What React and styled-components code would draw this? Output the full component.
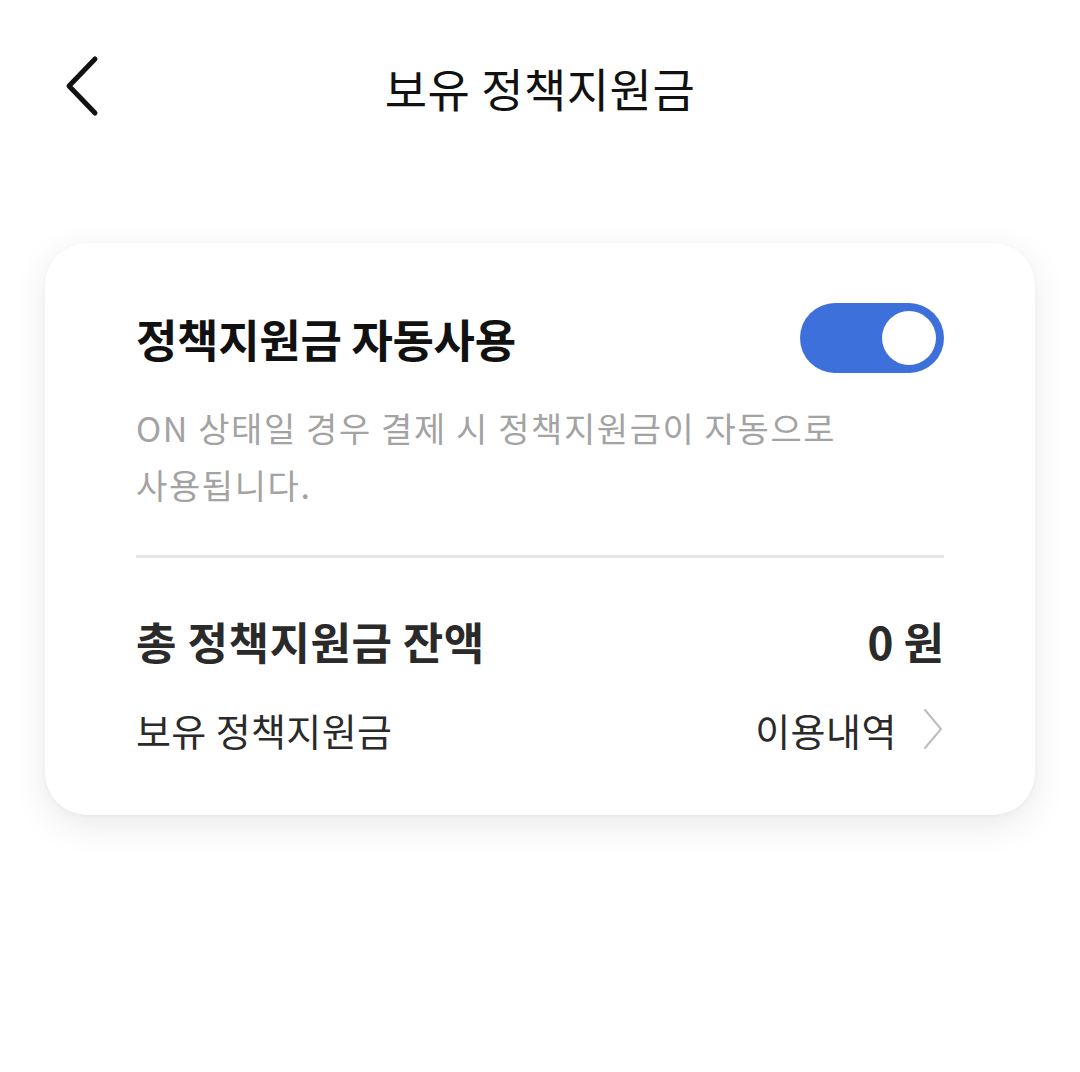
import React, { useState } from 'react';
import styled, { createGlobalStyle } from 'styled-components';

const GlobalStyle = createGlobalStyle`
  html, body {
    margin: 0;
    padding: 0;
    background: #ffffff;
  }
  body {
    font-family: "Noto Sans CJK KR", "Noto Sans", sans-serif;
    color: #111;
  }
`;

const Page = styled.div`
  width: 1080px;
  min-height: 1072px;
  background: #fff;
`;

const Header = styled.header`
  height: 174px;
  display: grid;
  grid-template-columns: 1fr auto 1fr;
  align-items: center;
  padding: 0 0 0 58px;
  box-sizing: border-box;
`;

const BackButton = styled.button`
  width: 48px;
  height: 64px;
  padding: 0;
  border: none;
  background: none;
  cursor: pointer;
  display: flex;
  align-items: center;
  justify-content: flex-start;
`;

const Title = styled.h1`
  margin: 0 58px 0 0;
  font-size: 46px;
  font-weight: 400;
  color: #111;
  letter-spacing: 0.5px;
`;

const Card = styled.section`
  margin: 69px 45px 0;
  padding: 60px 91px 56px;
  border-radius: 42px;
  background: #fff;
  box-shadow: 0 10px 36px rgba(0, 0, 0, 0.09), 0 1px 4px rgba(0, 0, 0, 0.04);
`;

const Row = styled.div`
  display: flex;
  justify-content: space-between;
  align-items: center;
  height: ${p => p.h || 60}px;
  margin-top: ${p => p.mt || 0}px;
`;

const SettingTitle = styled.span`
  font-size: 45px;
  font-weight: 700;
  color: #111;
  letter-spacing: -0.3px;
`;

const Switch = styled.button`
  width: 144px;
  height: 70px;
  border-radius: 35px;
  border: none;
  padding: 0 8px;
  background: ${p => (p.on ? '#3d70db' : '#cfcfcf')};
  display: flex;
  align-items: center;
  justify-content: ${p => (p.on ? 'flex-end' : 'flex-start')};
  cursor: pointer;
  box-sizing: border-box;
`;

const Knob = styled.span`
  width: 54px;
  height: 54px;
  border-radius: 50%;
  background: #fff;
`;

const Description = styled.p`
  margin: 26px 0 0;
  font-size: 34px;
  line-height: 57px;
  color: #a3a3a3;
  letter-spacing: 1.6px;
  max-width: 740px;
  word-break: keep-all;
`;

const Divider = styled.hr`
  margin: 42px 0 0;
  border: none;
  height: 3px;
  background: #e6e6e6;
`;

const TotalLabel = styled.span`
  font-size: 44px;
  font-weight: 700;
  color: #2a2a2a;
  letter-spacing: 0.5px;
`;

const Amount = styled.span`
  font-size: 44px;
  font-weight: 700;
  color: #2a2a2a;
`;

const SubLabel = styled.span`
  font-size: 38px;
  color: #2a2a2a;
  letter-spacing: 0.4px;
`;

const HistoryLink = styled.a`
  display: flex;
  align-items: center;
  gap: 25px;
  font-size: 38px;
  color: #2a2a2a;
  letter-spacing: 0.5px;
  text-decoration: none;
  cursor: pointer;
`;

const BackIcon = () => (
  <svg width="44" height="64" viewBox="0 0 44 64" fill="none">
    <path d="M37 4 L11 31 L37 58" stroke="#111" strokeWidth="5" strokeLinecap="round" strokeLinejoin="round" />
  </svg>
);

const ChevronIcon = () => (
  <svg width="22" height="42" viewBox="0 0 22 42" fill="none">
    <path d="M3 2 L19 21 L3 40" stroke="#bdbdbd" strokeWidth="2" strokeLinecap="round" strokeLinejoin="round" />
  </svg>
);

export default function App() {
  const [auto, setAuto] = useState(true);

  return (
    <Page>
      <GlobalStyle />
      <Header>
        <BackButton aria-label="뒤로">
          <BackIcon />
        </BackButton>
        <Title>보유 정책지원금</Title>
        <div />
      </Header>

      <Card>
        <Row h={70}>
          <SettingTitle>정책지원금 자동사용</SettingTitle>
          <Switch on={auto ? 1 : 0} onClick={() => setAuto(!auto)}>
            <Knob />
          </Switch>
        </Row>
        <Description>ON 상태일 경우 결제 시 정책지원금이 자동으로 사용됩니다.</Description>
        <Divider />
        <Row mt={53}>
          <TotalLabel>총 정책지원금 잔액</TotalLabel>
          <Amount>0 원</Amount>
        </Row>
        <Row mt={28}>
          <SubLabel>보유 정책지원금</SubLabel>
          <HistoryLink>
            이용내역
            <ChevronIcon />
          </HistoryLink>
        </Row>
      </Card>
    </Page>
  );
}
